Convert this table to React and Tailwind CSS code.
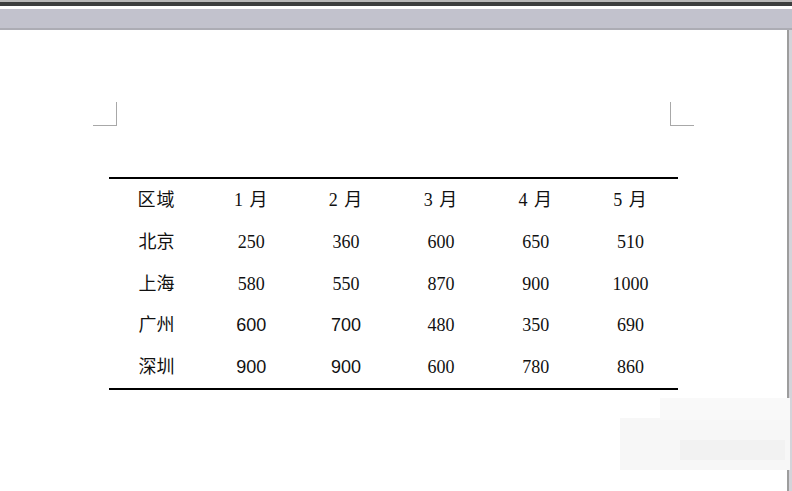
import React from "react";

const serif = "font-['Liberation_Serif','Noto_Sans_CJK_SC',serif]";
const sans = "font-['Liberation_Sans','Noto_Sans_CJK_SC',sans-serif]";

const header = ["区域", "1 月", "2 月", "3 月", "4 月", "5 月"];

// which cells render in a sans face in the screenshot
const rows = [
  { name: "北京", vals: ["250", "360", "600", "650", "510"], sansCols: [] },
  { name: "上海", vals: ["580", "550", "870", "900", "1000"], sansCols: [] },
  { name: "广州", vals: ["600", "700", "480", "350", "690"], sansCols: [0, 1] },
  { name: "深圳", vals: ["900", "900", "600", "780", "860"], sansCols: [0, 1] },
];

const App = () => {
  return (
    <div className="w-[792px] h-[491px] bg-white overflow-hidden relative">
      {/* window chrome */}
      <div className="h-[2px] bg-[#b9b9b9]" />
      <div className="h-[4px] bg-[#3d3f3f]" />
      <div className="h-[3px] bg-white" />
      <div className="h-[19px] bg-[#c2c2cd]" />
      <div className="h-[2px] bg-[#acacb4]" />

      <div className="flex h-[461px]">
        <div className="flex-1 bg-white pt-[72px] pl-[93px] pr-[93px]">
          {/* page corner marks */}
          <div className="flex justify-between">
            <div className="w-[24px] h-[24px] border-r border-b border-[#a8a8a8]" />
            <div className="w-[24px] h-[24px] border-l border-b border-[#a8a8a8]" />
          </div>

          <div className="mx-[16px] mt-[51px] border-t-2 border-b-2 border-black text-[18px] text-[#111]">
            <div className="grid grid-cols-6 h-[43px] items-center text-center">
              {header.map((h) => (
                <div key={h} className={`${serif} tracking-[1px]`}>
                  {h}
                </div>
              ))}
            </div>
            {rows.map((r) => (
              <div key={r.name} className="grid grid-cols-6 h-[41.5px] items-center text-center">
                <div className={sans}>{r.name}</div>
                {r.vals.map((v, i) => (
                  <div key={i} className={r.sansCols.includes(i) ? sans : serif}>
                    {v}
                  </div>
                ))}
              </div>
            ))}
          </div>
        </div>
        <div className="w-[2px] bg-[#9d9d9d]" />
        <div className="w-[3px] bg-[#d4d4da]" />
      </div>

      {/* blurred watermark patch */}
      <div className="absolute left-[620px] top-[418px] w-[170px] h-[52px] bg-[#f7f7f7]" />
      <div className="absolute left-[660px] top-[398px] w-[130px] h-[22px] bg-[#f9f9f9]" />
      <div className="absolute left-[680px] top-[440px] w-[105px] h-[20px] bg-[#f2f2f2]" />
    </div>
  );
};

export default App;
